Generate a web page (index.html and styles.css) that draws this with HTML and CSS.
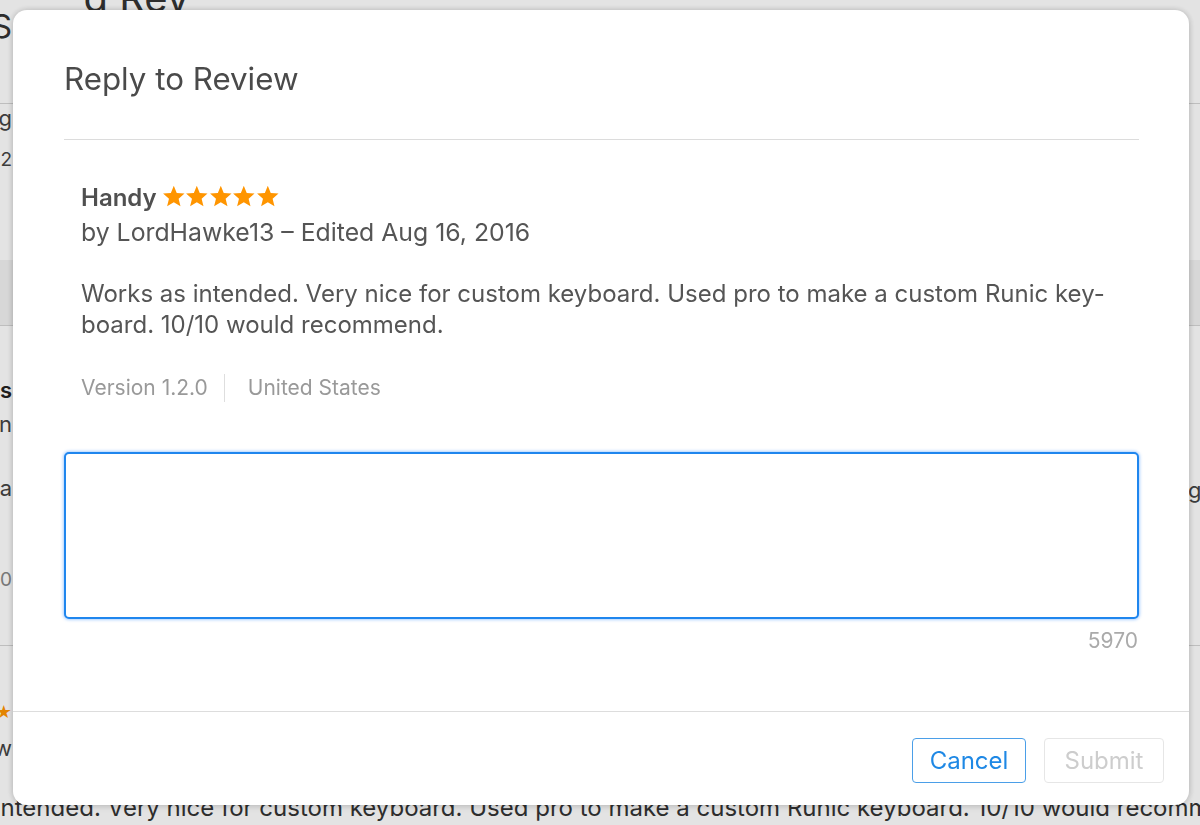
FILE: index.html
```html
<!DOCTYPE html>
<html lang="en">
<head>
<meta charset="utf-8">
<title>Reply to Review</title>
<link rel="stylesheet" href="styles.css">
</head>
<body>
<div class="page">
  <div class="bg-head">
    <div class="bg-side"><span class="bg-big">iOS</span></div>
    <div class="bg-title-clip"><div class="bg-title">Ratings and Reviews</div></div>
  </div>
  <div class="bg-row bg-row1">
    <div class="bg-side bg-stack">
      <span class="bg-text">Rating</span>
      <span class="bg-text bg-small">4.5 of 12</span>
    </div>
  </div>
  <div class="bg-band"></div>
  <div class="bg-row bg-row2">
    <div class="bg-side bg-stack">
      <span class="bg-text bg-bold">Reviews</span>
      <span class="bg-text">Written by Lin</span>
      <span class="bg-text bg-gap">It's a</span>
      <span class="bg-text bg-gap2">Version 1.0</span>
    </div>
    <div class="bg-right"><span class="bg-text">g</span></div>
  </div>
  <div class="bg-row bg-row3">
    <div class="bg-side bg-stack">
      <span class="bg-stars">★★★★★</span>
      <span class="bg-text bg-by">by LordHawkew</span>
    </div>
  </div>
  <div class="bg-line-text">Works as intended. Very nice for custom keyboard. Used pro to make a custom Runic keyboard. 10/10 would recommend.</div>
</div>

<div class="overlay">
  <div class="modal" role="dialog" aria-labelledby="modal-title">
    <div class="modal-body">
      <h2 class="modal-title" id="modal-title">Reply to Review</h2>
      <div class="review">
        <div class="review-title">Handy <span class="stars" aria-label="5 stars"><svg viewBox="0 0 24 24" class="star"><polygon points="12,0.8 15,8.1 22.9,8.7 16.9,13.9 18.8,21.7 12,17.5 5.2,21.7 7.1,13.9 1.1,8.7 9,8.1"/></svg><svg viewBox="0 0 24 24" class="star"><polygon points="12,0.8 15,8.1 22.9,8.7 16.9,13.9 18.8,21.7 12,17.5 5.2,21.7 7.1,13.9 1.1,8.7 9,8.1"/></svg><svg viewBox="0 0 24 24" class="star"><polygon points="12,0.8 15,8.1 22.9,8.7 16.9,13.9 18.8,21.7 12,17.5 5.2,21.7 7.1,13.9 1.1,8.7 9,8.1"/></svg><svg viewBox="0 0 24 24" class="star"><polygon points="12,0.8 15,8.1 22.9,8.7 16.9,13.9 18.8,21.7 12,17.5 5.2,21.7 7.1,13.9 1.1,8.7 9,8.1"/></svg><svg viewBox="0 0 24 24" class="star"><polygon points="12,0.8 15,8.1 22.9,8.7 16.9,13.9 18.8,21.7 12,17.5 5.2,21.7 7.1,13.9 1.1,8.7 9,8.1"/></svg></span></div>
        <div class="review-by">by LordHawke13 – Edited Aug 16, 2016</div>
        <p class="review-text">Works as intended. Very nice for custom keyboard. Used pro to make a custom Runic key-<br>board. 10/10 would recommend.</p>
        <div class="review-meta"><span>Version 1.2.0</span><span class="meta-sep"></span><span>United States</span></div>
      </div>
      <textarea class="reply" aria-label="Reply"></textarea>
      <div class="counter">5970</div>
    </div>
    <div class="modal-footer">
      <button class="btn btn-cancel" type="button">Cancel</button>
      <button class="btn btn-submit" type="button" disabled>Submit</button>
    </div>
  </div>
</div>
</body>
</html>
```

FILE: styles.css
```css
* { box-sizing: border-box; }

html, body {
  margin: 0;
  padding: 0;
  width: 1200px;
  height: 825px;
  overflow: hidden;
}

body {
  font-family: Inter, "Noto Sans", "Liberation Sans", sans-serif;
  background: #ffffff;
  color: #333;
}

/* ---------- background page (behind the modal) ---------- */
.page {
  width: 1200px;
  height: 825px;
  display: flex;
  flex-direction: column;
}

.bg-head {
  height: 104px;
  flex: none;
  border-bottom: 1px solid #d6d6d6;
  display: flex;
  align-items: flex-start;
}

.bg-side {
  width: 12px;
  flex: none;
  display: flex;
  justify-content: flex-end;
  white-space: nowrap;
}

.bg-stack {
  flex-direction: column;
  justify-content: flex-start;
  align-items: flex-end;
}

.bg-big {
  font-size: 32px;
  line-height: 40px;
  margin-top: 7px;
  color: #333;
}

.bg-title-clip {
  flex: none;
  width: 105px;
  margin-left: 71px;
  overflow: hidden;
  height: 30px;
  margin-top: -18px;
}

.bg-title {
  font-size: 40px;
  line-height: 40px;
  margin-top: -4px;
  margin-left: -197px;
  color: #333;
  white-space: nowrap;
}

.bg-row {
  display: flex;
  justify-content: space-between;
  flex: none;
}

.bg-row1 {
  height: 156px;
}

.bg-text {
  font-size: 22px;
  line-height: 28px;
  color: #444;
}

.bg-row1 .bg-small { margin-top: 14px; font-size: 19px; }

.bg-row2 .bg-text { line-height: 34px; }
.bg-bold { font-weight: 600; color: #222; }
.bg-row2 .bg-gap { margin-top: 30px; }
.bg-row2 .bg-gap2 { margin-top: 58px; font-size: 19px; color: #888; }

.bg-band {
  height: 66px;
  flex: none;
  background: #f2f2f2;
  border-bottom: 1px solid #d6d6d6;
}

.bg-row2 {
  height: 320px;
  padding-top: 47px;
  border-bottom: 1px solid #d6d6d6;
}

.bg-right {
  width: 12px;
  display: flex;
  padding-top: 100px;
  justify-content: flex-start;
  white-space: nowrap;
}

.bg-row3 {
  height: 147px;
  padding-top: 54px;
}

.bg-stars {
  color: #ff9500;
  font-family: "DejaVu Sans", sans-serif;
  font-size: 18px;
  line-height: 24px;
}

.bg-row3 .bg-by { margin-top: 10px; }

.bg-line-text {
  font-size: 24px;
  line-height: 30px;
  margin-left: -117px;
  white-space: nowrap;
  color: #333;
}

/* ---------- overlay + modal ---------- */
.overlay {
  position: fixed;
  inset: 0;
  background: rgba(0, 0, 0, 0.11);
  padding: 10px 11px 20px 13px;
  display: flex;
}

.modal {
  flex: 1;
  background: #ffffff;
  border-radius: 14px;
  box-shadow: 0 0 6px rgba(0, 0, 0, 0.18), 0 2px 10px rgba(0, 0, 0, 0.08);
  display: flex;
  flex-direction: column;
  overflow: hidden;
}

.modal-body {
  flex: 1;
  padding: 0 50px 0 51px;
  display: flex;
  flex-direction: column;
}

.modal-title {
  margin: 0;
  padding: 49px 0 40px;
  border-bottom: 1px solid #dcdcdc;
  font-size: 31.3px;
  line-height: 40px;
  font-weight: 400;
  color: #4a4a4a;
}

.review {
  padding: 42px 0 0 17px;
  color: #555;
  font-size: 24px;
}

.review-title {
  font-weight: 600;
  line-height: 31px;
  color: #505050;
  display: flex;
  align-items: center;
  gap: 5px;
}

.stars {
  display: inline-flex;
  margin-top: -2px;
}

.star {
  width: 23.6px;
  height: 23.6px;
  fill: #ff9500;
  display: block;
}

.review-by {
  margin-top: 4px;
  font-size: 24.8px;
  line-height: 31px;
}

.review-text {
  margin: 30px 0 0;
  line-height: 31px;
}

.review-meta {
  margin-top: 33px;
  display: flex;
  align-items: center;
  font-size: 21px;
  line-height: 30px;
  color: #999;
}

.meta-sep {
  width: 1px;
  height: 28px;
  background: #dedede;
  margin: 0 23px 0 16px;
}

.reply {
  display: block;
  margin-top: 49px;
  width: 100%;
  height: 167px;
  border: 2px solid #1f86ee;
  border-radius: 5px;
  box-shadow: 0 0 3px 1px rgba(70, 150, 255, 0.45);
  resize: none;
  outline: none;
  font: inherit;
}

.counter {
  text-align: right;
  font-size: 21px;
  line-height: 30px;
  margin-top: 7px;
  padding-right: 1px;
  color: #aaa;
}

.modal-footer {
  border-top: 1px solid #dddddd;
  padding: 26px 25px 22px;
  display: flex;
  justify-content: flex-end;
  gap: 18px;
}

.btn {
  height: 45px;
  border-radius: 4px;
  background: #fff;
  font-family: inherit;
  font-size: 24px;
  padding: 0;
  cursor: pointer;
}

.btn-cancel {
  width: 114px;
  border: 1px solid #4b9fe8;
  color: #1e88e5;
}

.btn-submit {
  width: 120px;
  border: 1px solid #e6e6e6;
  color: #cdcdcd;
  cursor: default;
}
```
